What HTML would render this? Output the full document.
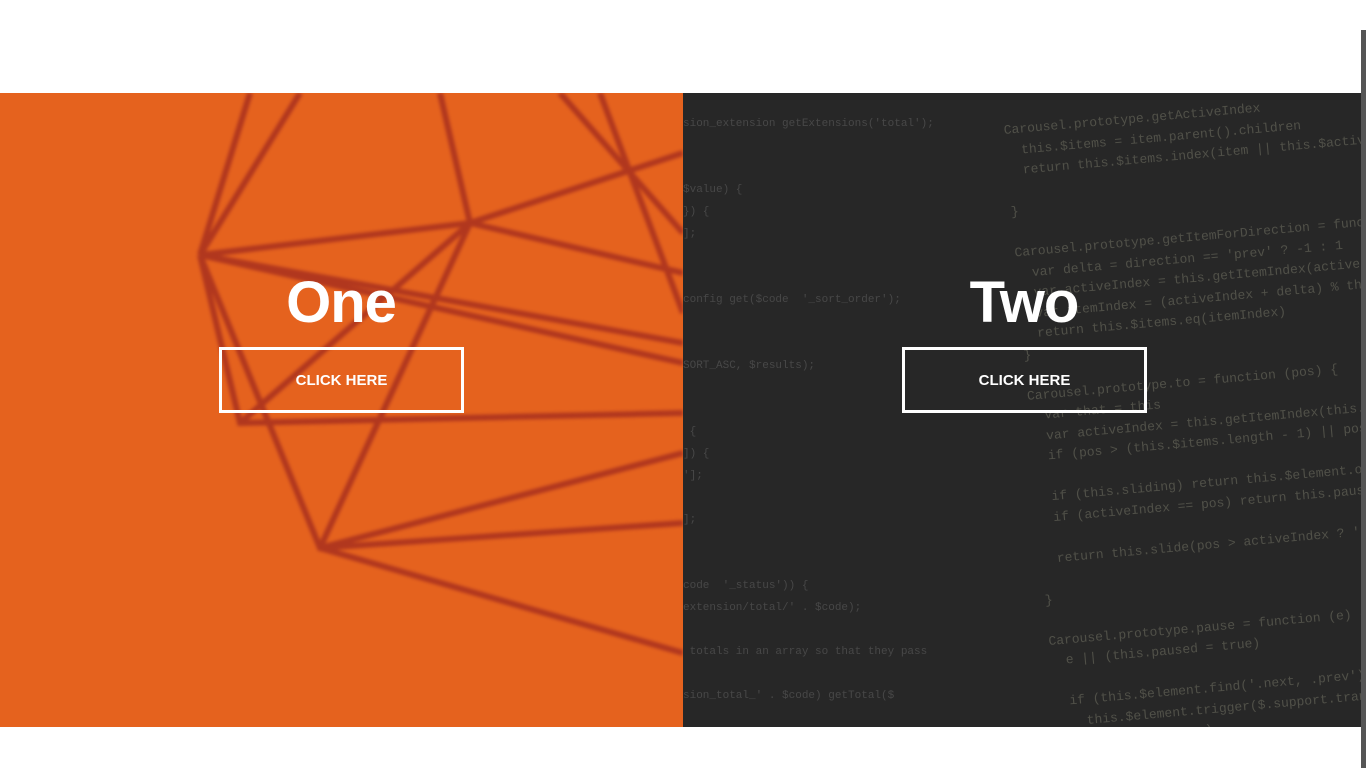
<!DOCTYPE html>
<html><head><meta charset="utf-8"><style>
*{margin:0;padding:0;box-sizing:border-box}
html,body{width:1366px;height:768px;overflow:hidden}
body{background:#fff;position:relative;font-family:"Liberation Sans",sans-serif}
.p{position:absolute;top:93px;height:634px;overflow:hidden}
#l{left:0;width:683px;background:#e5621e}
#r{left:683px;width:678px;background:#272727}
h1{position:absolute;width:300px;text-align:center;color:#fff;font-size:58px;font-weight:bold;top:176px;letter-spacing:-1px}
.b{position:absolute;top:254px;width:245px;height:66px;border:3px solid #fff;color:#fff;font-weight:bold;font-size:15px;text-align:center;line-height:62px}
.code{position:absolute;left:320px;top:28px;font-family:"Liberation Mono",monospace;font-size:13px;line-height:20.5px;color:#7a7a6a;opacity:.5;transform:rotate(-5deg);transform-origin:0 0;white-space:pre}
.code2{position:absolute;left:0;top:20px;font-family:"Liberation Mono",monospace;font-size:11px;line-height:22px;color:#777;opacity:.4;white-space:pre}
.sb{position:absolute;left:1361px;top:30px;width:5px;height:738px;background:#555}
</style></head><body>
<div class="p" id="l">
<svg width="683" height="634" style="position:absolute;left:0;top:0;filter:blur(1.5px)" stroke="#a8301f" stroke-width="6" fill="none" opacity=".85">
<path d="M200 162 L300 0 M200 162 L250 0 M200 162 L470 130 L683 180 M200 162 L683 250 M200 162 L683 270 M200 162 L320 455 L683 430 M200 162 L240 330 L683 320 M320 455 L470 130 L440 0 M320 455 L683 360 M470 130 L683 60 M320 455 L683 560 M240 330 L470 130 M560 0 L683 140 M600 0 L683 220"/>
</svg>
<h1 style="left:191px">One</h1>
<div class="b" style="left:219px">CLICK HERE</div>
</div>
<div class="p" id="r">
<div class="code2">sion_extension getExtensions('total');


$value) {
}) {
];


config get($code  '_sort_order');


SORT_ASC, $results);


 {
]) {
'];

];


code  '_status')) {
extension/total/' . $code);

 totals in an array so that they pass

sion_total_' . $code) getTotal($


unt($totals) - 1]) && !isset($totals[
1]['code']})) {
tals)  1]['code'] = $code;



tax_id => $value) {
xes[$tax_id]) {</div>
<div class="code">Carousel.prototype.getActiveIndex
  this.$items = item.parent().children
  return this.$items.index(item || this.$active)

}

Carousel.prototype.getItemForDirection = function (direction, active)
  var delta = direction == 'prev' ? -1 : 1
  var activeIndex = this.getItemIndex(active)
  var itemIndex = (activeIndex + delta) % this.$items.length
  return this.$items.eq(itemIndex)
}

Carousel.prototype.to = function (pos) {
  var that = this
  var activeIndex = this.getItemIndex(this.$active = this.$element
  if (pos > (this.$items.length - 1) || pos < 0) return

  if (this.sliding) return this.$element.one('slid.bs.carousel'
  if (activeIndex == pos) return this.pause().cycle()

  return this.slide(pos > activeIndex ? 'next' : 'prev', this.$items

}

Carousel.prototype.pause = function (e) {
  e || (this.paused = true)

  if (this.$element.find('.next, .prev').length && $.support.transi
    this.$element.trigger($.support.transition.end)
    this.cycle(true)
  }

  this.interval = clearInterval(this.interval)

  return this</div>
<h1 style="left:191px">Two</h1>
<div class="b" style="left:219px">CLICK HERE</div>
</div>
<div class="sb"></div>
</body></html>
